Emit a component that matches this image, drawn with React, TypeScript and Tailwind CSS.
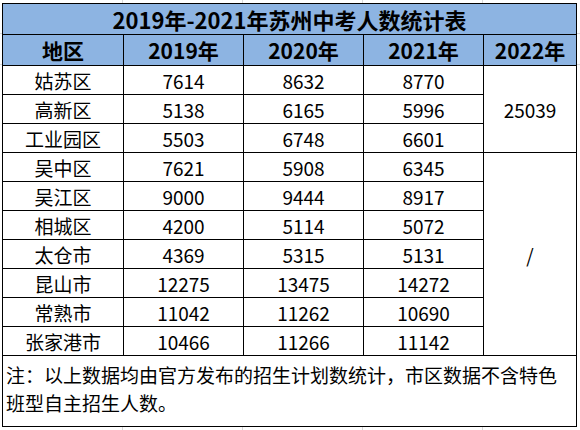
import React from "react";

type Row = {
  area: string;
  y2019: number;
  y2020: number;
  y2021: number;
};

const rows: Row[] = [
  { area: "姑苏区", y2019: 7614, y2020: 8632, y2021: 8770 },
  { area: "高新区", y2019: 5138, y2020: 6165, y2021: 5996 },
  { area: "工业园区", y2019: 5503, y2020: 6748, y2021: 6601 },
  { area: "吴中区", y2019: 7621, y2020: 5908, y2021: 6345 },
  { area: "吴江区", y2019: 9000, y2020: 9444, y2021: 8917 },
  { area: "相城区", y2019: 4200, y2020: 5114, y2021: 5072 },
  { area: "太仓市", y2019: 4369, y2020: 5315, y2021: 5131 },
  { area: "昆山市", y2019: 12275, y2020: 13475, y2021: 14272 },
  { area: "常熟市", y2019: 11042, y2020: 11262, y2021: 10690 },
  { area: "张家港市", y2019: 10466, y2020: 11266, y2021: 11142 },
];

const cell = "border border-black text-center align-middle p-0";

function App() {
  return (
    // sheet gridlines peek out around the table edges
    <div
      className="w-[580px] h-[430px] bg-white pt-[3px] pl-[2px] overflow-hidden bg-[linear-gradient(to_right,transparent_122px,#d9d9d9_122px,#d9d9d9_123px,transparent_123px,transparent_242px,#d9d9d9_242px,#d9d9d9_243px,transparent_243px,transparent_362px,#d9d9d9_362px,#d9d9d9_363px,transparent_363px,transparent_482px,#d9d9d9_482px,#d9d9d9_483px,transparent_483px),linear-gradient(to_bottom,transparent_33px,#d9d9d9_33px,#d9d9d9_34px,transparent_34px,transparent_64px,#d9d9d9_64px,#d9d9d9_65px,transparent_65px)]"
      style={{ fontFamily: '"Noto Sans CJK SC", "Noto Sans", sans-serif' }}
    >
      <table className="border-collapse table-fixed w-[574px] text-black bg-white">
        <colgroup>
          <col className="w-[121px]" />
          <col className="w-[120px]" />
          <col className="w-[120px]" />
          <col className="w-[120px]" />
          <col className="w-[93px]" />
        </colgroup>
        <thead>
          <tr className="h-[31px] bg-[#8db4e2]">
            <th colSpan={5} className={`${cell} text-[22px] font-bold leading-none`}>
              2019年-2021年苏州中考人数统计表
            </th>
          </tr>
          <tr className="h-[31px] bg-[#8db4e2]">
            <th className={`${cell} text-[21px] font-bold leading-none`}>地区</th>
            <th className={`${cell} text-[21px] font-bold leading-none`}>2019年</th>
            <th className={`${cell} text-[21px] font-bold leading-none`}>2020年</th>
            <th className={`${cell} text-[21px] font-bold leading-none`}>2021年</th>
            <th className={`${cell} text-[21px] font-bold leading-none`}>2022年</th>
          </tr>
        </thead>
        <tbody className="text-[19px] leading-none">
          {rows.map((row, i) => (
            <tr key={row.area} className="h-[29px]">
              <td className={cell}>{row.area}</td>
              <td className={cell}>{row.y2019}</td>
              <td className={cell}>{row.y2020}</td>
              <td className={cell}>{row.y2021}</td>
              {i === 0 && (
                <td rowSpan={3} className={cell}>
                  25039
                </td>
              )}
              {i === 3 && (
                <td rowSpan={7} className={cell}>
                  /
                </td>
              )}
            </tr>
          ))}
          <tr className="h-[71px]">
            <td
              colSpan={5}
              className="border border-black text-left align-top pl-[3px] pt-[5px] text-[19px] leading-[28px]"
            >
              注：以上数据均由官方发布的招生计划数统计，市区数据不含特色
              <br />
              班型自主招生人数。
            </td>
          </tr>
        </tbody>
      </table>
    </div>
  );
}

export default App;
